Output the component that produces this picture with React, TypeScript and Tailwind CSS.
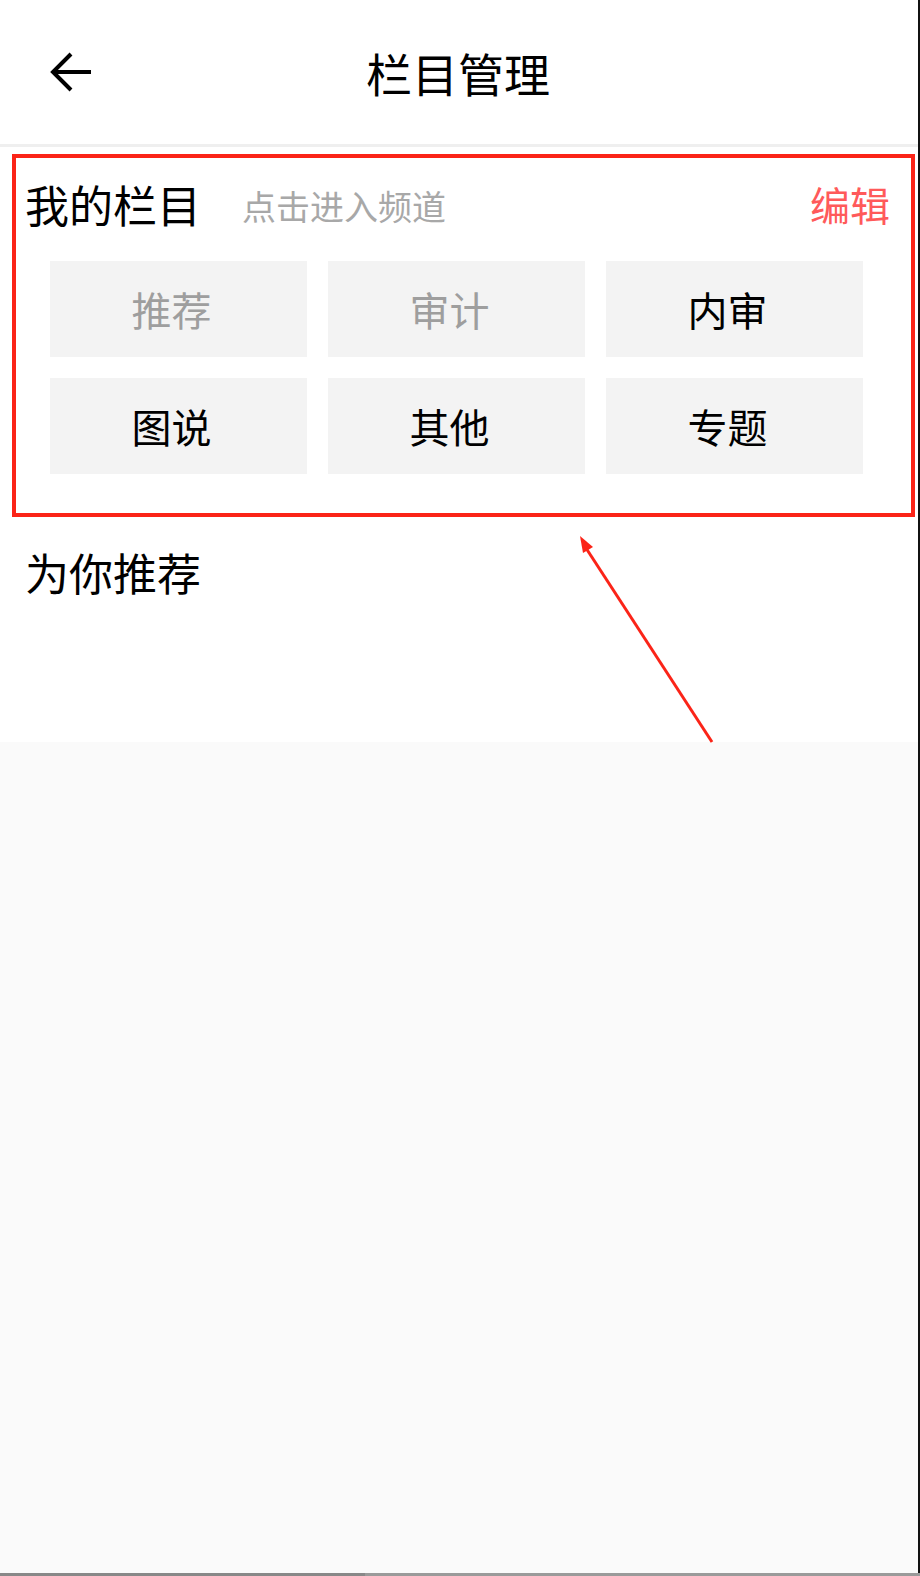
const tiles = [
  { label: "推荐", fixed: true },
  { label: "审计", fixed: true },
  { label: "内审", fixed: false },
  { label: "图说", fixed: false },
  { label: "其他", fixed: false },
  { label: "专题", fixed: false },
];

const BackIcon = () => (
  <svg width="44" height="44" viewBox="0 0 44 44" fill="none">
    <path d="M42 22H5M22 4L4 22L22 40" stroke="#000" strokeWidth="4" strokeLinecap="butt" strokeLinejoin="miter" />
  </svg>
);

export default function App() {
  return (
    <div
      className="relative w-[920px] h-[1576px] overflow-hidden bg-[#fafafa] flex flex-col"
      style={{ fontFamily: '"Noto Sans CJK SC", "Noto Sans", sans-serif' }}
    >
      {/* header */}
      <header className="h-[144px] bg-white grid grid-cols-[1fr_auto_1fr] items-center">
        <button className="ml-[49px] w-[44px] h-[44px] flex items-center justify-center">
          <BackIcon />
        </button>
        <h1 className="text-[46px] leading-none text-black -ml-[4px]">栏目管理</h1>
        <div />
      </header>
      <div className="h-[3px] bg-[#efefef]" />

      {/* channels */}
      <section className="h-[595px] bg-white flex flex-col pt-[27px]">
        <div className="h-[60px] flex items-center pl-[25px] pr-[30px]">
          <span className="text-[44px] leading-none text-black">我的栏目</span>
          <span className="ml-[41px] mt-[4px] text-[34px] leading-none text-[#a8a8a8]">点击进入频道</span>
          <span className="ml-auto text-[40px] leading-none text-[#ff5a5a]">编辑</span>
        </div>
        <div className="mt-[27px] ml-[50px] w-[813px] grid grid-cols-3 gap-[21px]">
          {tiles.map((t) => (
            <div
              key={t.label}
              className={`h-[96px] bg-[#f3f3f3] flex items-center justify-center pr-[14px] text-[40px] leading-none ${t.fixed ? "text-[#9e9e9e]" : "text-black"}`}
            >
              {t.label}
            </div>
          ))}
        </div>
        <div className="mt-[68px] h-[60px] flex items-center pl-[25px]">
          <span className="text-[44px] leading-none text-black">为你推荐</span>
        </div>
      </section>

      <div className="flex-1" />
      <div className="h-[3px] flex">
        <div className="w-[365px] bg-[#888]" />
        <div className="flex-1 bg-[#9a9a9a]" />
      </div>

      {/* annotation overlay */}
      <div className="absolute left-[12px] top-[154px] w-[903px] h-[363px] border-[4px] border-[#fb2418] pointer-events-none" />
      <svg className="absolute left-0 top-0 pointer-events-none" width="920" height="1576">
        <line x1="712" y1="742" x2="584" y2="545" stroke="#fb2418" strokeWidth="3" />
        <polygon points="580,536 593,547 583,553" fill="#fb2418" />
      </svg>
      <div className="absolute right-0 top-0 w-[2px] h-[1573px] bg-[#111]" />
    </div>
  );
}
